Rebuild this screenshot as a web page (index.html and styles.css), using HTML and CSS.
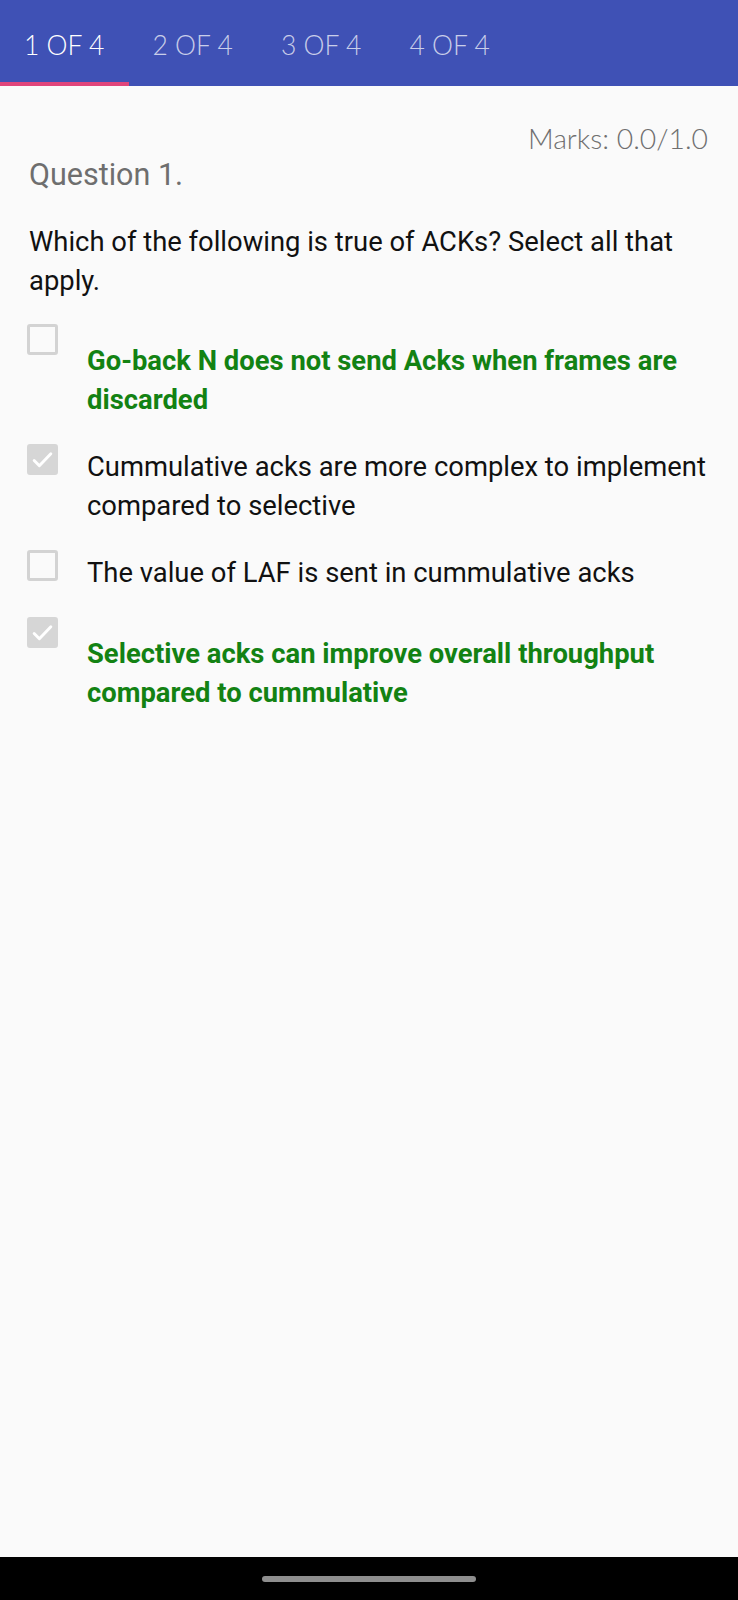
FILE: index.html
```html
<!DOCTYPE html>
<html>
<head>
<meta charset="utf-8">
<link rel="stylesheet" href="styles.css">
</head>
<body>
<div class="screen">
  <header class="tabbar">
    <div class="tab active">1 OF 4</div>
    <div class="tab">2 OF 4</div>
    <div class="tab">3 OF 4</div>
    <div class="tab">4 OF 4</div>
  </header>
  <main class="content">
    <div class="marks">Marks: 0.0/1.0</div>
    <div class="qlabel">Question 1.</div>
    <div class="qtext">Which of the following is true of ACKs? Select all that apply.</div>
    <div class="options">
      <div class="option">
        <span class="box"></span>
        <span class="otext correct">Go-back N does not send Acks when frames are discarded</span>
      </div>
      <div class="option">
        <span class="box checked"><svg viewBox="0 0 24 24" width="26" height="26"><path d="M4 12.5l5 5L20 6" fill="none" stroke="#fff" stroke-width="2.8" stroke-linecap="round" stroke-linejoin="round"/></svg></span>
        <span class="otext">Cummulative acks are more complex to implement compared to selective</span>
      </div>
      <div class="option">
        <span class="box"></span>
        <span class="otext">The value of LAF is sent in cummulative acks</span>
      </div>
      <div class="option">
        <span class="box checked"><svg viewBox="0 0 24 24" width="26" height="26"><path d="M4 12.5l5 5L20 6" fill="none" stroke="#fff" stroke-width="2.8" stroke-linecap="round" stroke-linejoin="round"/></svg></span>
        <span class="otext correct">Selective acks can improve overall throughput compared to cummulative</span>
      </div>
    </div>
  </main>
  <footer class="navbar"><span class="handle"></span></footer>
</div>
</body>
</html>
```
FILE: styles.css
```css
* { box-sizing: border-box; }
html, body { margin: 0; padding: 0; }
body { background: #fafafa; width: 738px; height: 1600px; overflow: hidden; }
.screen { display: flex; flex-direction: column; height: 1600px; }
.tabbar {
  display: flex;
  height: 86px;
  background: #3f51b5;
  flex-shrink: 0;
}
.tab {
  width: 128.5px;
  display: flex;
  align-items: center;
  justify-content: center;
  padding-top: 8px;
  font-family: Lato, sans-serif;
  font-weight: 300;
  font-size: 26.5px;
  color: rgba(255,255,255,0.72);
  border-bottom: 4px solid transparent;
}
.tab.active { color: #fff; border-bottom-color: #e0457b; }
.content {
  flex: 1;
  padding: 0 30px 0 29px;
  font-family: Roboto, sans-serif;
}
.marks {
  text-align: right;
  font-family: Lato, sans-serif;
  font-weight: 300;
  font-size: 28.3px;
  color: #6f6f6f;
  line-height: 36px;
  margin-top: 34px;
}
.qlabel {
  font-size: 30.5px;
  color: #6e6e6e;
  line-height: 38px;
  margin-top: 0px;
}
.qtext {
  font-size: 27.4px;
  color: #111;
  line-height: 39px;
  margin-top: 29px;
}
.options {
  display: flex;
  flex-direction: column;
  gap: 24px;
  margin-top: 23px;
}
.option {
  display: flex;
  align-items: flex-start;
}
.box {
  width: 31px;
  height: 31px;
  border: 3px solid #d3d3d3;
  border-radius: 3px;
  flex-shrink: 0;
  margin-left: -2px;
  display: flex;
  align-items: center;
  justify-content: center;
}
.box.checked { background: #d6d6d6; border-color: #d6d6d6; }
.otext {
  margin-left: 29px;
  font-size: 27.4px;
  line-height: 39px;
  color: #111;
  margin-top: 4px;
}
.otext.correct {
  color: #138213;
  font-weight: 700;
  margin-top: 18px;
}
.navbar {
  height: 43px;
  background: #000;
  flex-shrink: 0;
  display: flex;
  align-items: center;
  justify-content: center;
}
.handle {
  width: 214px;
  height: 6px;
  border-radius: 3px;
  background: #8e8e8e;
}
```
